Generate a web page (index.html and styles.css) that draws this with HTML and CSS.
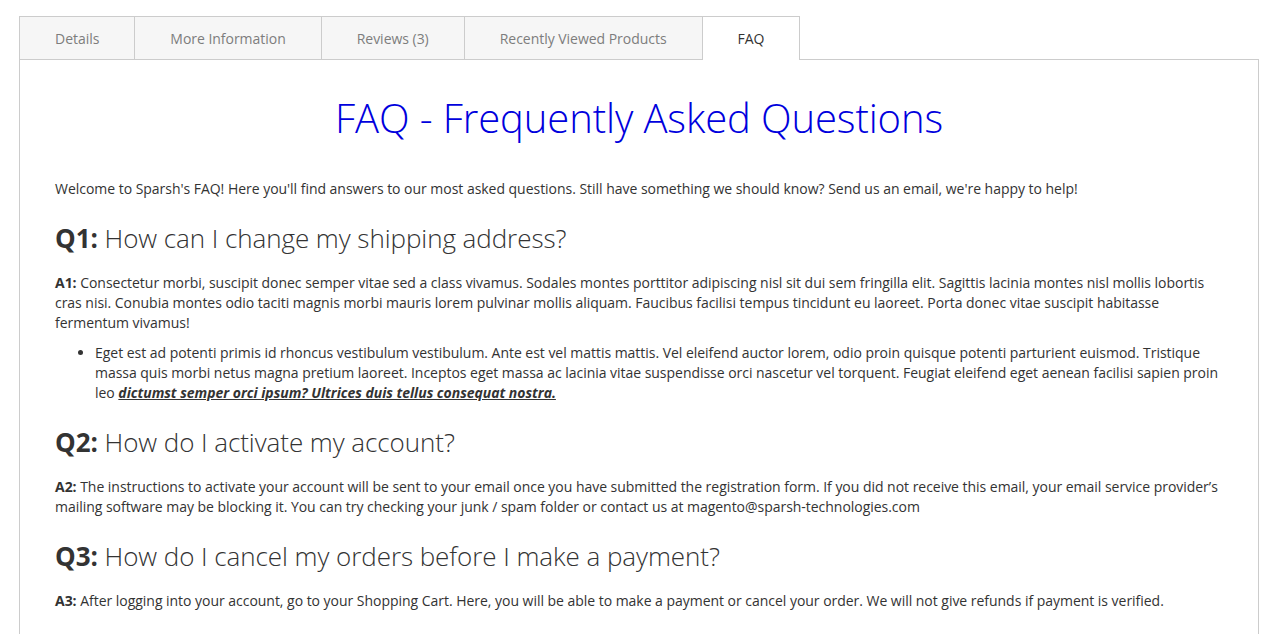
FILE: index.html
```html
<!DOCTYPE html>
<html lang="en">
<head>
    <meta charset="UTF-8">
    <meta name="viewport" content="width=device-width, initial-scale=1.0">
    <title>FAQ</title>
    <link rel="stylesheet" href="styles.css">
</head>
<body>
    <div class="product-tabs">
        <div class="tab-titles">
            <div class="tab-title">Details</div>
            <div class="tab-title">More Information</div>
            <div class="tab-title">Reviews (3)</div>
            <div class="tab-title">Recently Viewed Products</div>
            <div class="tab-title active">FAQ</div>
        </div>
        <div class="tab-content">
            <h1 class="faq-title">FAQ - Frequently Asked Questions</h1>
            <p class="intro">Welcome to Sparsh's FAQ! Here you'll find answers to our most asked questions. Still have something we should know? Send us an email, we're happy to help!</p>

            <h2><strong>Q1:</strong> How can I change my shipping address?</h2>
            <p><strong>A1:</strong> Consectetur morbi, suscipit donec semper vitae sed a class vivamus. Sodales montes porttitor adipiscing nisl sit dui sem fringilla elit. Sagittis lacinia montes nisl mollis lobortis cras nisi. Conubia montes odio taciti magnis morbi mauris lorem pulvinar mollis aliquam. Faucibus facilisi tempus tincidunt eu laoreet. Porta donec vitae suscipit habitasse fermentum vivamus!</p>
            <ul>
                <li>Eget est ad potenti primis id rhoncus vestibulum vestibulum. Ante est vel mattis mattis. Vel eleifend auctor lorem, odio proin quisque potenti parturient euismod. Tristique massa quis morbi netus magna pretium laoreet. Inceptos eget massa ac lacinia vitae suspendisse orci nascetur vel torquent. Feugiat eleifend eget aenean facilisi sapien proin leo <a href="#"><strong><em>dictumst semper orci ipsum? Ultrices duis tellus consequat nostra.</em></strong></a></li>
            </ul>

            <h2><strong>Q2:</strong> How do I activate my account?</h2>
            <p><strong>A2:</strong> The instructions to activate your account will be sent to your email once you have submitted the registration form. If you did not receive this email, your email service provider’s mailing software may be blocking it. You can try checking your junk / spam folder or contact us at magento@sparsh-technologies.com</p>

            <h2><strong>Q3:</strong> How do I cancel my orders before I make a payment?</h2>
            <p><strong>A3:</strong> After logging into your account, go to your Shopping Cart. Here, you will be able to make a payment or cancel your order. We will not give refunds if payment is verified.</p>
        </div>
    </div>
</body>
</html>
```

FILE: styles.css
```css
body, html {
    margin: 0;
    font-family: "Open Sans", "Liberation Sans", sans-serif;
    font-size: 14px;
    line-height: 20px;
    color: #333;
    background-color: white;
}
.product-tabs {
    width: 1240px;
    margin: 16px 0 0 19px;
}
.tab-titles {
    display: flex;
}
.tab-title {
    height: 41px;
    line-height: 42px;
    padding: 1px 35px 0 35px;
    background-color: #f6f6f6;
    color: #7d7d7d;
    border: 1px solid #cccccc;
    border-bottom: none;
    margin-right: -1px;
    letter-spacing: -0.03px;
}
.tab-title.active {
    background-color: white;
    color: #333;
    height: 42px;
    margin-bottom: -1px;
    position: relative;
    z-index: 1;
}
.tab-content {
    border: 1px solid #cccccc;
    padding: 35px;
    letter-spacing: -0.03px;
}
.faq-title {
    margin: 1px 0 39px;
    text-align: center;
    font-size: 40px;
    line-height: 44px;
    font-weight: 300;
    color: #0000dd;
    letter-spacing: -0.1px;
}
h2 {
    font-size: 26px;
    line-height: 29px;
    font-weight: 300;
    margin: 25px 0 20px;
    letter-spacing: -0.06px;
}
h2 strong {
    font-weight: 700;
}
p {
    margin: 0 0 10px;
}
p.intro {
    margin: 0;
}
strong {
    font-weight: 700;
}
ul {
    margin: 0 0 25px;
    padding-left: 40px;
}
a {
    color: #333;
    text-decoration: underline;
}
```
